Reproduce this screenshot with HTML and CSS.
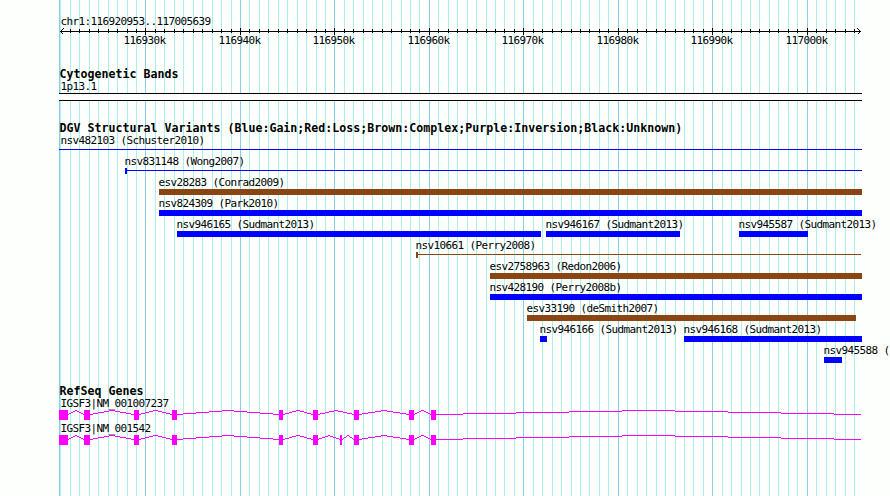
FILE: index.html
```
<!DOCTYPE html>
<html lang="en">
<head>
  <meta charset="UTF-8" />
  <meta name="viewport" content="width=device-width, initial-scale=1.0" />
  <title>chr1:116920953..117005639</title>
  <link rel="stylesheet" href="styles.css">
</head>
<body>
  <div class="browser">
    <svg class="grid" id="grid" width="890" height="496"></svg>

    <!-- Ruler -->
    <svg class="track ruler" id="ruler" width="890" height="65">
      <text class="label" x="60.5" y="25">chr1:116920953..117005639</text>
      <path class="axis" d="M60 31.5H861M63.5 28.5L60.5 31.5L63.5 34.5M857.5 28.5L860.5 31.5L857.5 34.5" />
    </svg>

    <!-- Cytobands -->
    <svg class="track cyto" width="890" height="55">
      <text class="title" x="59.5" y="13">Cytogenetic Bands</text>
      <text class="label" x="60.5" y="25">1p13.1</text>
      <rect class="band" x="59" y="28" width="803" height="8" />
      <path class="axis" d="M59 28.5H862M59 35.5H862" />
    </svg>

    <!-- Structural variants -->
    <svg class="track variants" id="variants" width="890" height="260">
      <text class="title" x="59.5" y="12">DGV Structural Variants (Blue:Gain;Red:Loss;Brown:Complex;Purple:Inversion;Black:Unknown)</text>
    </svg>

    <!-- Genes -->
    <svg class="track genes" id="genes" width="890" height="116">
      <text class="title" x="59.5" y="15">RefSeq Genes</text>
    </svg>
  </div>

  <script>
    const NS = "http://www.w3.org/2000/svg";

    // x pixel of every 1 kb line, starting at 116921k
    const lines = [
      60, 70, 79, 89, 98, 108, 117, 127, 136, 145, 155, 164, 174, 183, 193, 202, 212, 221, 231, 240,
      249, 259, 268, 278, 287, 297, 306, 316, 325, 334, 344, 353, 363, 372, 382, 391, 401, 410, 419, 429,
      438, 448, 457, 467, 476, 486, 495, 504, 514, 523, 533, 542, 552, 561, 571, 580, 589, 599, 608, 618,
      627, 637, 646, 656, 665, 675, 684, 693, 703, 712, 722, 731, 741, 750, 759, 769, 778, 788, 797, 807,
      816, 826, 835, 845, 854
    ];

    // row, start, end, label, type, label x (if it differs from start)
    const variants = [
      [0, 59, 862, "nsv482103 (Schuster2010)", "gain thin", 60.5],
      [1, 125, 862, "nsv831148 (Wong2007)", "gain thin"],
      [2, 159, 862, "esv28283 (Conrad2009)", "complex"],
      [3, 159, 862, "nsv824309 (Park2010)", "gain"],
      [4, 177, 541, "nsv946165 (Sudmant2013)", "gain"],
      [4, 546, 680, "nsv946167 (Sudmant2013)", "gain"],
      [4, 739, 808, "nsv945587 (Sudmant2013)", "gain"],
      [5, 416, 861, "nsv10661 (Perry2008)", "complex thin"],
      [6, 490, 862, "esv2758963 (Redon2006)", "complex"],
      [7, 490, 862, "nsv428190 (Perry2008b)", "gain"],
      [8, 527, 856, "esv33190 (deSmith2007)", "complex"],
      [9, 540, 547, "nsv946166 (Sudmant2013)", "gain"],
      [9, 684, 862, "nsv946168 (Sudmant2013)", "gain"],
      [10, 824, 842, "nsv945588 (", "gain"]
    ];

    const exons = [[59, 68], [84, 90], [134, 139], [172, 177], [279, 283], [313, 318], [354, 359], [409, 414], [431, 436]];
    const genes = [
      { name: "IGSF3|NM_001007237", y: 27, exons: exons },
      { name: "IGSF3|NM_001542", y: 52, exons: [...exons.slice(0, 6), [340, 342], ...exons.slice(6)] }
    ];

    function add(parent, tag, attrs, text) {
      const el = document.createElementNS(NS, tag);
      for (const key in attrs) el.setAttribute(key, attrs[key]);
      if (text) el.textContent = text;
      parent.appendChild(el);
    }

    function drawRuler() {
      const grid = document.getElementById("grid");
      const ruler = document.getElementById("ruler");
      add(grid, "rect", { class: "major", x: 59, y: 0, width: 1, height: 496 });
      lines.forEach((x, i) => {
        const major = i % 10 === 9;
        add(grid, "rect", { class: major ? "major" : "minor", x: x, y: 0, width: 1, height: 496 });
        if (i > 0) add(ruler, "rect", { x: x, y: major ? 28 : 29, width: 1, height: major ? 7 : 4 });
        if (major) add(ruler, "text", { class: "label", x: x - 21.5, y: 44 }, (116921 + i) + "k");
      });
    }

    function drawVariants() {
      const svg = document.getElementById("variants");
      variants.forEach(([row, start, end, label, type, labelX]) => {
        const top = 27 + row * 21;
        const thin = type.includes("thin");
        add(svg, "text", { class: "label", x: labelX || start - 0.5, y: top - 3 }, label);
        add(svg, "rect", { class: type, x: start, y: thin ? top + 2 : top, width: end - start, height: thin ? 1 : 6 });
        if (thin && row > 0) add(svg, "rect", { class: type, x: start, y: top, width: 2, height: 6 });
      });
    }

    // Intron as a stepped hat, 4px high in the middle
    function intron(from, to, base) {
      const mid = (from + to) / 2;
      let d = "";
      for (let x = from; x < to; x++) {
        const rise = Math.round(4 * (1 - Math.abs(x + 0.5 - mid) / (mid - from)));
        d += `M${x} ${base - rise}h1v1h-1z`;
      }
      return d;
    }

    function drawGenes() {
      const svg = document.getElementById("genes");
      genes.forEach(gene => {
        gene.exons.forEach(([start, end], i) => {
          const next = gene.exons[i + 1];
          add(svg, "rect", { class: "gene", x: start, y: gene.y + 3, width: end - start, height: 10 });
          add(svg, "path", { class: "gene", d: intron(end, next ? next[0] : 861, gene.y + 7) });
        });
        // name goes last so the underscore stays above the intron
        add(svg, "text", { class: "label", x: 60.5, y: gene.y }, gene.name);
      });
    }

    drawRuler();
    drawVariants();
    drawGenes();
  </script>
</body>
</html>
```
FILE: styles.css
```
body {
  margin: 0;
  background-color: #fdfffc;
}
.browser {
  position: relative;
  display: flex;
  flex-direction: column;
  width: 890px;
  height: 496px;
  overflow: hidden;
}
.grid {
  position: absolute;
  top: 0;
  left: 0;
}
.track {
  position: relative;
  flex: none;
  display: block;
}
svg {
  shape-rendering: crispEdges;
}
.label {
  font-family: "DejaVu Sans Mono", monospace;
  font-size: 11px;
  letter-spacing: -0.622px;
  white-space: pre;
}
.title {
  font-family: "DejaVu Sans Mono", monospace;
  font-size: 11.6px;
  font-weight: bold;
  letter-spacing: 0.016px;
}
.axis {
  fill: none;
  stroke: #000000;
}
.band {
  fill: #fdfffc;
}
.major {
  fill: #87ceeb;
}
.minor {
  fill: #afeeee;
}
.gain {
  fill: #0000ff;
}
.complex {
  fill: #8b4513;
}
.gene {
  fill: #ff00ff;
}
```
